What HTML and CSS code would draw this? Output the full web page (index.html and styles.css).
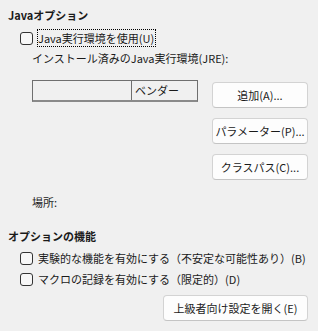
FILE: index.html
```html
<!DOCTYPE html>
<html lang="ja">
<head>
	<meta charset="UTF-8">
	<title>Javaオプション</title>
	<link rel="stylesheet" href="styles.css">
</head>
<body>
    <div class="page">
        <div class="group_title">Javaオプション</div>
        <label class="check first">
            <span class="check_box"></span>
            <span class="check_text focused">Java実行環境を使用(U)</span>
        </label>
        <div class="indent jre_label">インストール済みのJava実行環境(JRE):</div>

        <div class="jre_row">
            <div class="jre_table">
                <div class="col col_name"></div>
                <div class="col col_vendor">ベンダー</div>
            </div>
            <div class="side_buttons">
                <button class="btn side_btn">追加(A)...</button>
                <button class="btn side_btn">パラメーター(P)...</button>
                <button class="btn side_btn">クラスパス(C)...</button>
            </div>
        </div>

        <div class="indent location">場所:</div>

        <div class="group_title second">オプションの機能</div>
        <label class="check exp">
            <span class="check_box"></span>
            <span class="check_text">実験的な機能を有効にする（不安定な可能性あり）(B)</span>
        </label>
        <label class="check macro">
            <span class="check_box"></span>
            <span class="check_text">マクロの記録を有効にする（限定的）(D)</span>
        </label>

        <div class="bottom_row">
            <button class="btn expert_btn">上級者向け設定を開く(E)</button>
        </div>
    </div>
</body>
</html>
```

FILE: styles.css
```css
body{
    margin: 0;
    background: #f0f0f0;
    color: #1a1a1a;
    font-family: "Noto Sans CJK JP", "Noto Sans", sans-serif;
    font-size: 11px;
}
.page{
    width: 318px;
    height: 331px;
    padding: 6px 10px 0 8px;
    box-sizing: border-box;
    display: flex;
    flex-direction: column;
}
.group_title{
    font-weight: bold;
    line-height: 18px;
    height: 18px;
}
.group_title.second{
    margin-top: 16px;
}
.check{
    display: flex;
    align-items: center;
    height: 16px;
    padding-left: 12px;
}
.check.first{
    margin-top: 6px;
}
.check.exp{
    margin-top: 5px;
}
.check.macro{
    margin-top: 5px;
}
.check_box{
    width: 11px;
    height: 11px;
    border: 1px solid #333;
    border-radius: 3px;
    background: #f7f7f7;
    margin-right: 5px;
    flex-shrink: 0;
}
.check_text{
    line-height: 16px;
    white-space: nowrap;
}
.focused{
    outline: 1px dotted #000;
    padding: 0 1px 0 0;
}
.indent{
    padding-left: 24px;
    line-height: 18px;
    height: 18px;
}
.jre_label{
    margin-top: 3px;
}
.jre_row{
    display: flex;
    margin-top: 13px;
    padding-left: 24px;
}
.jre_table{
    width: 166px;
    height: 22px;
    box-sizing: border-box;
    border: 1px solid #6f6f6f;
    border-bottom: 2px solid #8a8a8a;
    display: flex;
}
.col{
    line-height: 19px;
}
.col_name{
    width: 98px;
    border-right: 1px solid #6f6f6f;
}
.col_vendor{
    padding-left: 3px;
}
.side_buttons{
    margin-left: 14px;
    padding-top: 2px;
    display: flex;
    flex-direction: column;
    gap: 10px;
}
.btn{
    font-family: inherit;
    font-size: 11px;
    color: #1a1a1a;
    background: #fdfdfd;
    border: 1px solid #d3d3d3;
    border-bottom-color: #c4c4c4;
    border-radius: 4px;
    height: 26px;
    padding: 0;
    white-space: nowrap;
}
.side_btn{
    width: 96px;
}
.location{
    margin-top: 13px;
}
.bottom_row{
    display: flex;
    justify-content: flex-end;
    margin-top: 8px;
}
.expert_btn{
    width: 145px;
}
```
